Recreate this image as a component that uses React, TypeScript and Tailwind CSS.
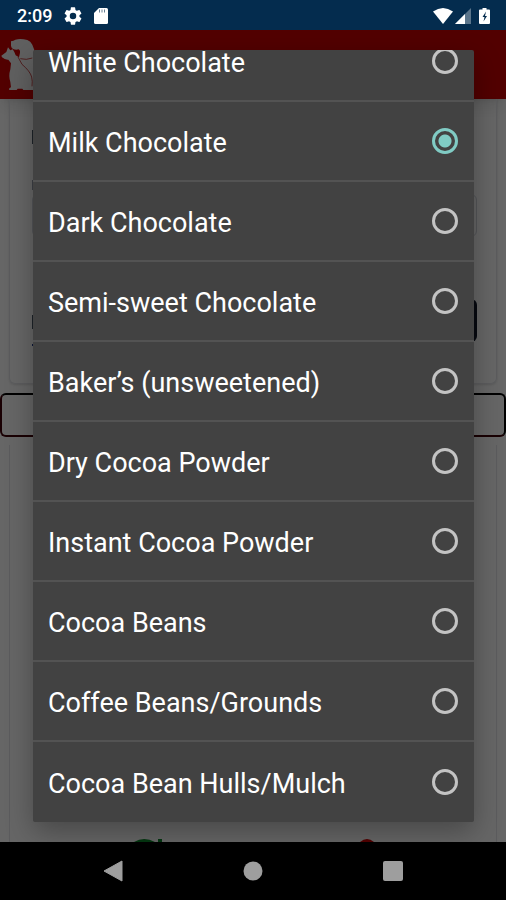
import { useState } from "react";

const options = [
  "White Chocolate",
  "Milk Chocolate",
  "Dark Chocolate",
  "Semi-sweet Chocolate",
  "Baker’s (unsweetened)",
  "Dry Cocoa Powder",
  "Instant Cocoa Powder",
  "Cocoa Beans",
  "Coffee Beans/Grounds",
  "Cocoa Bean Hulls/Mulch",
];

function StatusBar() {
  return (
    <header className="flex h-[30px] shrink-0 items-center justify-between bg-[#042c4e] pl-[17px] pr-4 pt-px text-white">
      <div className="flex items-center gap-3">
        <span className="text-[18px] font-medium leading-6">2:09</span>
        <svg className="h-[18px] w-[18px]" viewBox="2 2 20 20" fill="currentColor">
          <path d="M19.14 12.94c.04-.3.06-.61.06-.94 0-.32-.02-.64-.07-.94l2.03-1.58a.49.49 0 0 0 .12-.61l-1.92-3.32a.49.49 0 0 0-.59-.22l-2.39.96c-.5-.38-1.03-.7-1.62-.94l-.36-2.54a.48.48 0 0 0-.48-.41h-3.84c-.24 0-.43.17-.47.41l-.36 2.54c-.59.24-1.13.57-1.62.94l-2.39-.96c-.22-.08-.47 0-.59.22L2.74 8.87c-.12.21-.08.47.12.61l2.03 1.58c-.05.3-.09.63-.09.94s.02.64.07.94l-2.03 1.58a.49.49 0 0 0-.12.61l1.92 3.32c.12.22.37.29.59.22l2.39-.96c.5.38 1.03.7 1.62.94l.36 2.54c.05.24.24.41.48.41h3.84c.24 0 .44-.17.47-.41l.36-2.54c.59-.24 1.13-.56 1.62-.94l2.39.96c.22.08.47 0 .59-.22l1.92-3.32c.12-.22.07-.47-.12-.61zM12 15.6a3.6 3.6 0 1 1 0-7.2 3.6 3.6 0 0 1 0 7.2z" />
        </svg>
        <svg className="h-4 w-[14px]" viewBox="0 0 14 16">
          <path fill="currentColor" d="M5 0h7.5Q14 0 14 1.5v13q0 1.5-1.5 1.5h-11Q0 16 0 14.5V5z" />
          <path stroke="#042c4e" strokeOpacity=".6" strokeWidth="1" d="M5.5 1.5v3M8 1.5v3M10.5 1.5v3" />
        </svg>
      </div>
      <div className="flex items-center">
        <svg className="h-4 w-5" viewBox="0 0 20 16" fill="currentColor">
          <path d="M0 3.5Q10-3.500 20 3.500L10 16z" />
        </svg>
        <svg className="ml-0.5 h-4 w-4" viewBox="0 0 16 16" fill="currentColor">
          <path opacity=".35" d="M16 0v16H0z" />
          <path d="M10 6v10H0z" />
        </svg>
        <svg className="ml-2 h-4 w-[11px]" viewBox="0 0 11 16">
          <path fill="currentColor" d="M3.5 0h4v1.5H10q1 0 1 1V15q0 1-1 1H1q-1 0-1-1V2.500q0-1 1-1h2.500z" />
          <path fill="#042c4e" d="M7 3.500L3.500 9H5.500L4.500 13.500L8 8H6z" />
        </svg>
      </div>
    </header>
  );
}

// Cat in front of a sitting dog
function PetLogo() {
  return (
    <svg className="h-[69px] w-10" viewBox="0 90 120 207">
      <path
        fill="#f0f0f0"
        d="M33 124q8-1 13-5 16-4 36 1 10 4 15 14l6 16v120H70l-3-4H53l-3 4H28q-3-5 5-8l-2-16q-6-18 0-38l2-18-8-11q-10 1-19-7l-2-5 15-11 5-14 7 9 7-3q7 10 9 18l10 6 3-14q2-6-4-10-8 3-17-1-6-4-6-10z"
      />
      <path fill="none" stroke="#b00000" strokeWidth="2" d="M61 176q18 5 36-2M54 171l12 22q24 20 29 38 3 12 1 28" />
    </svg>
  );
}

// Calculator page that stays dimmed behind the picker
function BackgroundPage() {
  return (
    <div className="flex flex-1 flex-col overflow-hidden bg-white" aria-hidden="true">
      <div className="flex h-[69px] shrink-0 items-center bg-[#cc0000] shadow-lg">
        <PetLogo />
      </div>

      <div className="mx-[9px] flex h-[285px] shrink-0 flex-col rounded-b-md border border-t-0 border-gray-200 pl-[22px] pr-[19px] shadow-sm">
        <div className="mt-[31px] h-[14px] w-10 bg-gray-600" />
        <div className="mt-9 h-[10px] w-10 bg-gray-400" />
        <div className="mt-1 h-[43px] rounded-md border border-gray-300" />
        <div className="mt-[62px] h-[43px] rounded-md border-r-[3px] border-gray-900">
          <div className="mt-4 h-[14px] w-10 bg-gray-600" />
        </div>
        <div className="mt-0.5 h-[2px] w-10 bg-blue-900" />
      </div>

      <div className="mt-[9px] h-11 shrink-0 rounded-md border-2 border-black border-b-[#400008] border-l-[#400008]" />

      <div className="mx-[9px] mt-2 flex flex-1 items-end justify-center border-x border-gray-200">
        <svg className="h-[3px] w-[241px]" viewBox="0 0 241 3">
          <path fill="#0c8a2c" d="M1 3Q11-3 22 3zM25 0h4v3h-4z" />
          <path fill="#d00000" d="M227 3q7-6 14 0z" />
        </svg>
      </div>
    </div>
  );
}

export default function App() {
  const [selected, setSelected] = useState("Milk Chocolate");

  return (
    <div className="flex min-h-screen flex-col bg-black font-['Roboto',sans-serif]">
      <StatusBar />

      <main className="relative flex flex-1 flex-col">
        <BackgroundPage />

        {/* Picker dialog */}
        <div className="absolute inset-0 flex flex-col bg-black/60 py-5 pl-[33px] pr-8">
          <div
            role="dialog"
            aria-label="Chocolate type"
            className="flex min-h-0 flex-1 flex-col justify-end overflow-hidden rounded-xs bg-[#424242] shadow-[0_10px_28px_rgba(0,0,0,0.3)]"
          >
            {options.map((option) => (
              <label
                key={option}
                className="flex h-20 shrink-0 cursor-pointer items-center justify-between border-b-2 border-[#535353] pl-[15px] pr-4 text-[27px] leading-6 text-white last:border-b-0"
              >
                <span className="pt-[3px]">{option}</span>
                <input
                  type="radio"
                  name="chocolate"
                  value={option}
                  checked={selected === option}
                  onChange={() => setSelected(option)}
                  className="h-[26px] w-[26px] appearance-none rounded-full border-[3px] border-[#c3c3c3] checked:border-[#80cbc4] checked:bg-[radial-gradient(circle,#80cbc4_6px,transparent_7px)]"
                />
              </label>
            ))}
          </div>
        </div>
      </main>

      <nav className="flex h-[58px] shrink-0 items-center justify-center gap-[120px] text-[#9e9e9e]">
        <button type="button" aria-label="Back">
          <svg className="h-[22px] w-5" viewBox="0 0 20 22" fill="currentColor">
            <path d="M19 1v20L1 11z" stroke="currentColor" strokeLinejoin="round" />
          </svg>
        </button>
        <button type="button" aria-label="Home">
          <svg className="h-5 w-5" viewBox="0 0 20 20" fill="currentColor">
            <circle cx="10" cy="10" r="9.5" />
          </svg>
        </button>
        <button type="button" aria-label="Recent apps">
          <svg className="h-5 w-5" viewBox="0 0 20 20" fill="currentColor">
            <rect width="20" height="20" rx="2" />
          </svg>
        </button>
      </nav>
    </div>
  );
}
